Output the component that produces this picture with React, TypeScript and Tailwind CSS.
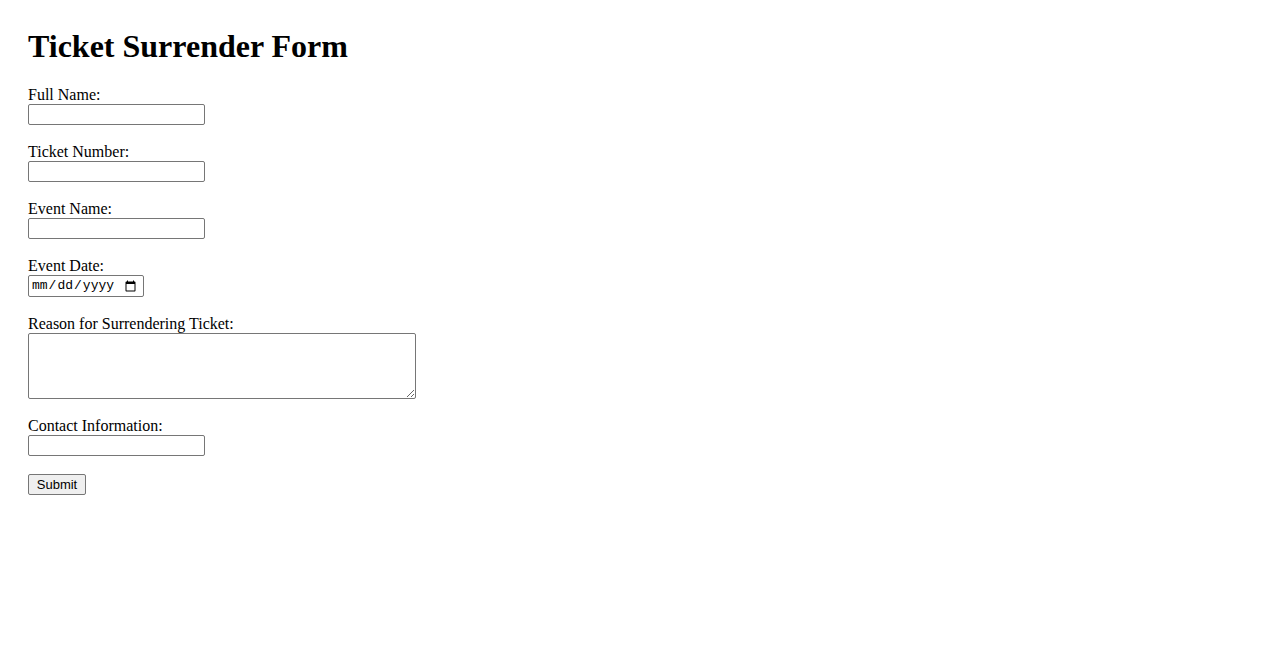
import React from "react";

const fieldClass =
  "block w-[177px] h-[21px] border border-[#767676] rounded-[2px] px-[2px] text-[13px] bg-white";

const App: React.FC = () => {
  return (
    <div className="min-h-[650px] bg-white text-black px-[28px] pt-[28px] font-['Liberation_Serif',serif]">
      <h1 className="text-[32px] font-bold leading-[37px] mb-[21px]">
        Ticket Surrender Form
      </h1>

      <form className="flex flex-col items-start text-[16px]">
        {/* Full name */}
        <label className="leading-[18px]">Full Name:</label>
        <input type="text" className={`${fieldClass} mb-[18px]`} />

        {/* Ticket number */}
        <label className="leading-[18px]">Ticket Number:</label>
        <input type="text" className={`${fieldClass} mb-[18px]`} />

        {/* Event name */}
        <label className="leading-[18px]">Event Name:</label>
        <input type="text" className={`${fieldClass} mb-[18px]`} />

        {/* Event date */}
        <label className="leading-[18px]">Event Date:</label>
        <input
          type="date"
          className="block w-[116px] h-[22px] border border-[#767676] rounded-[2px] pl-[2px] pr-[4px] text-[13px] font-['Liberation_Mono',monospace] bg-white mb-[18px]"
        />

        {/* Reason */}
        <label className="leading-[18px]">Reason for Surrendering Ticket:</label>
        <textarea className="block w-[388px] h-[66px] border border-[#767676] rounded-[2px] p-[2px] text-[13px] font-['Liberation_Mono',monospace] bg-white mb-[18px]" />

        {/* Contact */}
        <label className="leading-[18px]">Contact Information:</label>
        <input type="text" className={`${fieldClass} mb-[18px]`} />

        <button
          type="button"
          className="w-[58px] h-[21px] border border-[#767676] rounded-[2px] bg-[#efefef] text-[13px] leading-none font-['Liberation_Sans',sans-serif] text-black"
        >
          Submit
        </button>
      </form>
    </div>
  );
};

export default App;
